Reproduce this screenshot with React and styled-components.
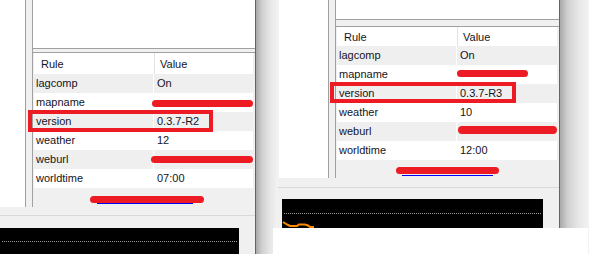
import React from "react";
import styled, { createGlobalStyle } from "styled-components";

const Global = createGlobalStyle`
  html, body {
    margin: 0;
    padding: 0;
    background: #fff;
  }
`;

const Page = styled.div`
  position: relative;
  display: flex;
  width: 589px;
  height: 254px;
  overflow: hidden;
  background: #fff;
  font-family: "Liberation Sans", Arial, sans-serif;
  font-size: 11px;
  color: #14141e;
`;

const Shot = styled.div`
  position: relative;
  flex-shrink: 0;
  display: flex;
  flex-direction: column;
  width: 280px;
  border-right: 1px solid #646464;
  background: #f0f0f0;
  &.left {
    width: 255px;
  }
`;

const Shadow = styled.div`
  flex-shrink: 0;
  width: ${(p) => p.$w}px;
  background: linear-gradient(
    to right,
    #a8a8a8 0%,
    #cfcfcf 25%,
    #e6e6e6 60%,
    #f4f4f4 100%
  );
`;

const TopArea = styled.div`
  display: flex;
  height: ${(p) => p.$h}px;
  flex-shrink: 0;
`;

const Sidebar = styled.div`
  width: ${(p) => p.$w}px;
  background: #fff;
`;

const Splitter = styled.div`
  width: 6px;
  background: #f0f0f0;
  border-left: 1px solid #a0a0a0;
  border-right: 1px solid #a0a0a0;
`;

const Panel = styled.div`
  flex: 1;
  display: flex;
  flex-direction: column;
  background: #f0f0f0;
`;

const Preview = styled.div`
  height: ${(p) => p.$h}px;
  background: #fff;
`;

const HSplit = styled.div`
  box-sizing: border-box;
  height: ${(p) => p.$h}px;
  background: #f0f0f0;
  border-top: 1px solid #a0a0a0;
  border-bottom: 1px solid #a0a0a0;
`;

const Table = styled.div`
  display: flex;
  flex-direction: column;
  margin: 0 2px 0 1px;
  background: #fff;
`;

const HeaderRow = styled.div`
  display: grid;
  grid-template-columns: 120px 1fr;
  height: ${(p) => p.$h}px;
  align-items: center;
  background: #fff;
`;

const HeaderCell = styled.div`
  height: 100%;
  display: flex;
  align-items: center;
  padding-left: 7px;
  & + & {
    border-left: 1px solid #e3e3e3;
    padding-left: 5px;
  }
`;

const Row = styled.div`
  display: grid;
  grid-template-columns: 119px 1fr;
  column-gap: 1px;
  height: 19px;
  background: #fff;
`;

const Cell = styled.div`
  position: relative;
  display: flex;
  align-items: center;
  padding-left: ${(p) => (p.$value ? 3 : 2)}px;
  padding-bottom: 1px;
  background: ${(p) => (p.$shade ? "#efefef" : "#fff")};
  white-space: nowrap;
`;

const LinkArea = styled.div`
  position: relative;
  flex: 1;
  background: #f0f0f0;
`;

const BottomArea = styled.div`
  flex: 1;
  display: flex;
  flex-direction: column;
  background: #f0f0f0;
  padding-top: ${(p) => p.$top}px;
  margin-left: ${(p) => p.$ml || 0}px;
`;

const Rule = styled.div`
  height: 0;
  border-top: 1px solid #d9d9d9;
`;

const Chart = styled.div`
  position: relative;
  flex: 1;
  width: ${(p) => p.$w}px;
  margin-top: ${(p) => p.$gap}px;
  margin-left: ${(p) => p.$ml}px;
  background: #000;
`;

const Dotted = styled.div`
  margin: ${(p) => p.$top}px 2px 0 2px;
  border-top: 1px dotted #9a9a9a;
`;

const Mark = styled.div`
  position: absolute;
  left: ${(p) => p.$x}px;
  top: ${(p) => p.$y}px;
  width: ${(p) => p.$w}px;
  height: ${(p) => p.$h}px;
  border: 4px solid #ed1c24;
  box-sizing: border-box;
  pointer-events: none;
`;

const Scribble = styled.div`
  position: absolute;
  left: ${(p) => p.$x}px;
  top: ${(p) => p.$y}px;
  width: ${(p) => p.$w}px;
  height: ${(p) => p.$h || 7}px;
  background: #ed1c24;
  border-radius: 4px;
`;

const Underline = styled.div`
  position: absolute;
  left: ${(p) => p.$x}px;
  top: ${(p) => p.$y}px;
  width: ${(p) => p.$w}px;
  height: 1px;
  background: #0000ff;
`;

const Cover = styled.div`
  position: absolute;
  left: 273px;
  top: 228px;
  width: 315px;
  height: 26px;
  background: #fff;
`;

const rules = (list) =>
  list.map((r, i) => (
    <Row key={r[0]}>
      <Cell $shade={i % 2 === 0}>{r[0]}</Cell>
      <Cell $shade={i % 2 === 0} $value>
        {r[1]}
      </Cell>
    </Row>
  ));

const ServerShot = ({ cfg, data, children }) => (
  <Shot className={cfg.cls}>
    <TopArea $h={cfg.top}>
      <Sidebar $w={cfg.side} />
      <Splitter />
      <Panel>
        <Preview $h={cfg.preview} />
        <HSplit $h={cfg.split} />
        <Table>
          <HeaderRow $h={cfg.header}>
            <HeaderCell>Rule</HeaderCell>
            <HeaderCell>Value</HeaderCell>
          </HeaderRow>
          {rules(data)}
        </Table>
        <LinkArea />
      </Panel>
    </TopArea>
    <BottomArea $top={cfg.bottomTop} $ml={cfg.bottomMl}>
      <Rule />
      <Chart $w={cfg.chartW} $gap={cfg.chartGap} $ml={cfg.chartMl}>
        <Dotted $top={cfg.dotTop} />
        {cfg.plot && (
          <svg
            width="40"
            height="30"
            style={{ position: "absolute", left: 0, top: 0 }}
          >
            <polyline
              points="1,23 5,25.5 8,27 15,27 17,25.5 23,25.5 26,26.5 28,28 32,28"
              fill="none"
              stroke="#ff8c00"
              strokeWidth="2"
            />
          </svg>
        )}
      </Chart>
    </BottomArea>
    {children}
  </Shot>
);

const leftCfg = {
  cls: "left",
  top: 207,
  side: 25,
  preview: 48,
  split: 5,
  header: 21,
  bottomTop: 8,
  chartGap: 12,
  chartW: 239,
  chartMl: 0,
  dotTop: 13,
  plot: false,
};

const rightCfg = {
  cls: "right",
  top: 178,
  side: 49,
  preview: 19,
  split: 8,
  header: 19,
  bottomTop: 9,
  bottomMl: -1,
  chartGap: 11,
  chartW: 261,
  chartMl: 4,
  dotTop: 14,
  plot: true,
};

const App = () => (
  <Page>
    <Global />
    <ServerShot
      cfg={leftCfg}
      data={[
        ["lagcomp", "On"],
        ["mapname", ""],
        ["version", "0.3.7-R2"],
        ["weather", "12"],
        ["weburl", ""],
        ["worldtime", "07:00"],
      ]}
    >
      <Scribble $x={152} $y={100} $w={101} />
      <Scribble $x={151} $y={156} $w={102} />
      <Underline $x={97} $y={203} $w={96} />
      <Scribble $x={90} $y={196} $w={114} />
      <Mark $x={28} $y={110} $w={185} $h={22} />
    </ServerShot>
    <Shadow $w={23} />
    <ServerShot
      cfg={rightCfg}
      data={[
        ["lagcomp", "On"],
        ["mapname", ""],
        ["version", "0.3.7-R3"],
        ["weather", "10"],
        ["weburl", ""],
        ["worldtime", "12:00"],
      ]}
    >
      <Scribble $x={178} $y={70} $w={71} />
      <Scribble $x={179} $y={126} $w={99} $h={8} />
      <Underline $x={123} $y={175} $w={91} />
      <Scribble $x={117} $y={167} $w={103} />
      <Mark $x={51} $y={82} $w={186} $h={21} />
    </ServerShot>
    <Shadow $w={30} />
    <Cover />
  </Page>
);

export default App;
